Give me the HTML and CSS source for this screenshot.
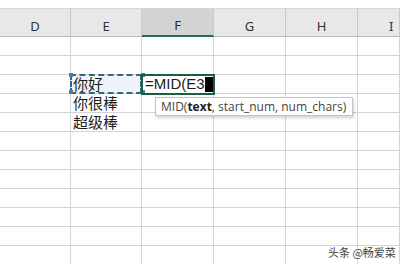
FILE: index.html
```html
<!DOCTYPE html>
<html lang="zh">
<head>
    <meta charset="UTF-8">
    <title>MID</title>
    <link rel="stylesheet" href="styles.css">
</head>
<body>
    <div class="sheet">
        <div class="head">D</div>
        <div class="head">E</div>
        <div class="head active">F</div>
        <div class="head">G</div>
        <div class="head">H</div>
        <div class="head last">I</div>

        <div class="cell"></div><div class="cell"></div><div class="cell"></div><div class="cell"></div><div class="cell"></div><div class="cell"></div>
        <div class="cell"></div><div class="cell"></div><div class="cell"></div><div class="cell"></div><div class="cell"></div><div class="cell"></div>

        <div class="cell"></div>
        <div class="cell copy">
            <span class="marks"></span>
            <span class="txt">你好</span>
        </div>
        <div class="cell edit">
            <span class="txt">=MID(E3</span><span class="caret"></span>
            <div class="tip">MID(<b>text</b>, start_num, num_chars)</div>
        </div>
        <div class="cell"></div><div class="cell"></div><div class="cell"></div>

        <div class="cell"></div><div class="cell"><span class="txt">你很棒</span></div><div class="cell"></div><div class="cell"></div><div class="cell"></div><div class="cell"></div>
        <div class="cell"></div><div class="cell"><span class="txt">超级棒</span></div><div class="cell"></div><div class="cell"></div><div class="cell"></div><div class="cell"></div>

        <div class="cell"></div><div class="cell"></div><div class="cell"></div><div class="cell"></div><div class="cell"></div><div class="cell"></div>
        <div class="cell"></div><div class="cell"></div><div class="cell"></div><div class="cell"></div><div class="cell"></div><div class="cell"></div>
        <div class="cell"></div><div class="cell"></div><div class="cell"></div><div class="cell"></div><div class="cell"></div><div class="cell"></div>
        <div class="cell"></div><div class="cell"></div><div class="cell"></div><div class="cell"></div><div class="cell"></div><div class="cell"></div>
        <div class="cell"></div><div class="cell"></div><div class="cell"></div><div class="cell"></div><div class="cell"></div><div class="cell"></div>
        <div class="cell"></div><div class="cell"></div><div class="cell"></div><div class="cell"></div><div class="cell"></div><div class="cell"></div>
        <div class="cell"></div><div class="cell"></div><div class="cell"></div><div class="cell"></div><div class="cell"></div><div class="cell"></div>
    </div>
    <div class="mark">头条 @畅爱菜</div>
</body>
</html>
```

FILE: styles.css
```css
body, html {
    margin: 0;
    padding: 0;
    background: #fff;
    overflow: hidden;
    font-family: "Noto Sans", "Noto Sans CJK SC", sans-serif;
    color: #222;
}

.sheet {
    display: grid;
    width: 400px;
    height: 255px;
    overflow: hidden;
    grid-template-columns: 71px 71px 72px 72px 72px 42px;
    grid-template-rows: 28px;
    grid-auto-rows: 19px;
    margin-top: 8px;
    border-top: 1px solid #d6d6d6;
}

.head {
    display: flex;
    align-items: flex-end;
    justify-content: center;
    padding-bottom: 1px;
    box-sizing: border-box;
    background: #e8e8e8;
    border-right: 1px solid #c8c8c8;
    border-bottom: 1px solid #b9b9b9;
    font-size: 13px;
    color: #333;
}

.head.last {
    justify-content: flex-start;
    padding-left: 31px;
}

.head.active {
    background: #d3d3d3;
    border-bottom: 2px solid #217346;
    color: #2b2b2b;
}

.cell {
    position: relative;
    box-sizing: border-box;
    border-right: 1px solid #d4d4d4;
    border-bottom: 1px solid #d4d4d4;
    display: flex;
    align-items: center;
    padding-left: 2px;
}

.txt {
    font-family: "Open Sans", "Noto Sans CJK SC", sans-serif;
    font-size: 15px;
    line-height: 18px;
    color: #1c1c1c;
}

.copy {
    background: #eef3f8;
}

.marks {
    position: absolute;
    left: -1px;
    top: -1px;
    right: -1px;
    bottom: -1px;
    border: 2px dashed #2f6a84;
}

.marks::before {
    content: "";
    position: absolute;
    width: 4px;
    height: 4px;
    background: #5a7896;
    left: -3px;
    top: -3px;
    box-shadow: 0 17px 0 #5a7896, 72px 0 0 #5a7896, 72px 17px 0 #5a7896;
}

.edit {
    outline: 2px solid #1e5f3b;
    outline-offset: -1px;
    z-index: 2;
    padding-left: 3px;
}

.edit .txt {
    font-family: "Liberation Sans", "Noto Sans", sans-serif;
    font-size: 15px;
}

.caret {
    width: 11px;
    height: 15px;
    background: #000;
}

.tip {
    position: absolute;
    left: 13px;
    top: 22px;
    width: 198px;
    height: 19px;
    box-sizing: border-box;
    padding-left: 5px;
    background: #fff;
    border: 1px solid #c4c4c4;
    box-shadow: 1px 2px 3px rgba(0, 0, 0, 0.18);
    font-family: "Open Sans", sans-serif;
    font-size: 12px;
    line-height: 17px;
    color: #444;
    white-space: nowrap;
}

.tip b {
    color: #222;
}

.mark {
    position: absolute;
    left: 328px;
    top: 244px;
    font-size: 11px;
    color: #444;
    text-shadow: 0 0 2px #fff;
    font-family: "Noto Sans CJK SC", sans-serif;
}
```
